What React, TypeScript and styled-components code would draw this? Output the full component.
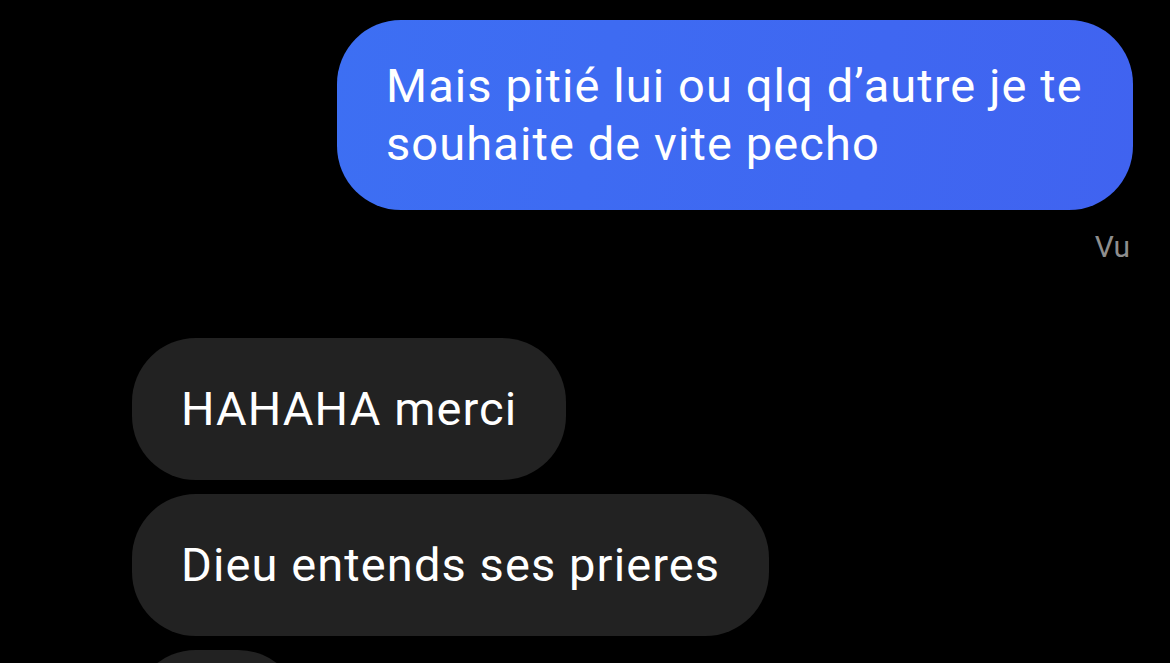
import styled, { createGlobalStyle } from "styled-components";

const GlobalStyle = createGlobalStyle`
  html, body {
    margin: 0;
    padding: 0;
    background: #000;
    height: 663px;
    overflow: hidden;
  }
`;

function App() {
  return (
    <>
      <GlobalStyle />
      <S.Thread>
        <S.Outgoing>
          <S.SentBubble>
            Mais pitié lui ou qlq d’autre je te
            <br />
            souhaite de vite pecho
          </S.SentBubble>
          <S.Seen>Vu</S.Seen>
        </S.Outgoing>

        <S.Incoming>
          <S.ReceivedBubble>HAHAHA merci</S.ReceivedBubble>
          <S.ReceivedBubble>Dieu entends ses prieres</S.ReceivedBubble>
          <S.PendingBubble $width={170} />
        </S.Incoming>
      </S.Thread>
    </>
  );
}

export default App;

const S = {
  Thread: styled.div`
    display: flex;
    flex-direction: column;
    width: 1170px;
    height: 663px;
    overflow: hidden;
    padding: 20px 37px 0 132px;
    box-sizing: border-box;
    font-family: Roboto, "Liberation Sans", sans-serif;
    -webkit-font-smoothing: antialiased;
  `,

  Outgoing: styled.div`
    display: flex;
    flex-direction: column;
    align-items: flex-end;
    flex-shrink: 0;
  `,

  SentBubble: styled.div`
    width: 796px;
    box-sizing: border-box;
    padding: 37px 49px;
    border-radius: 64px;
    background: linear-gradient(100deg, #3d6ff3 0%, #4063f0 100%);
    color: #fff;
    font-size: 47px;
    line-height: 58px;
    letter-spacing: 1.1px;
    white-space: nowrap;
  `,

  Seen: styled.div`
    margin-top: 20px;
    padding-right: 3px;
    color: #8e8e8e;
    font-size: 30px;
    line-height: 34px;
  `,

  Incoming: styled.div`
    display: flex;
    flex-direction: column;
    align-items: flex-start;
    gap: 14px;
    margin-top: 74px;
    flex-shrink: 0;
  `,

  ReceivedBubble: styled.div`
    padding: 42px 49px;
    border-radius: 64px;
    background: #222222;
    color: #fff;
    font-size: 47px;
    line-height: 58px;
    letter-spacing: 1.1px;
    white-space: nowrap;
  `,

  PendingBubble: styled.div<{ $width: number }>`
    width: ${({ $width }) => $width}px;
    height: 142px;
    border-radius: 64px;
    background: #222222;
  `,
};
